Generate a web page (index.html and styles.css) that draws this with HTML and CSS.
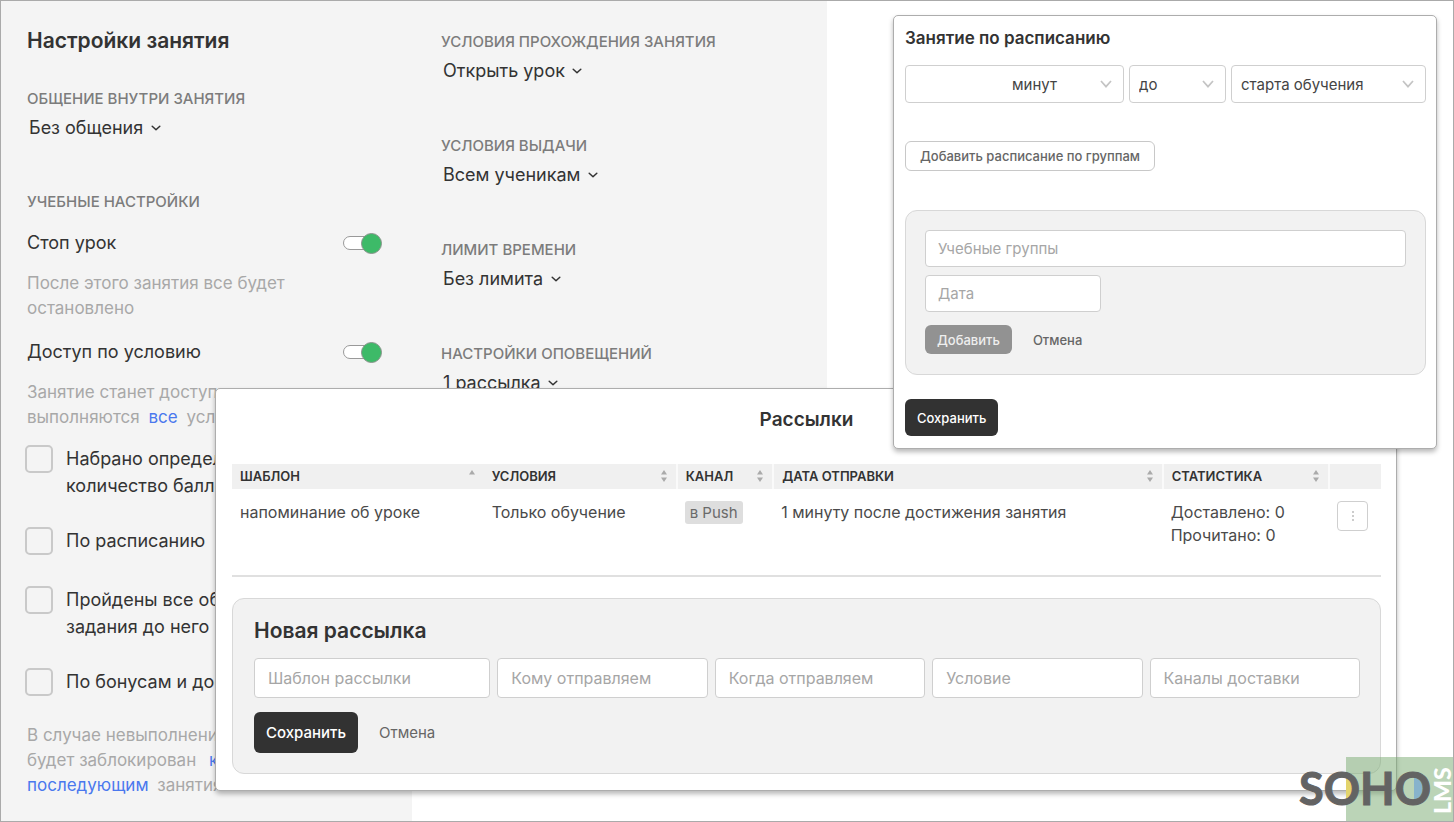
FILE: index.html
```html
<!DOCTYPE html>
<html lang="ru">
<head>
<meta charset="utf-8">
<title>Настройки занятия</title>
<link rel="stylesheet" href="styles.css">
</head>
<body>
<svg class="sprite" aria-hidden="true">
  <symbol id="chevron" viewBox="0 0 10 10"><path d="M1.2 3.2 5 6.8 8.8 3.2" fill="none" stroke="currentColor" stroke-width="1.5" stroke-linecap="round" stroke-linejoin="round"/></symbol>
  <symbol id="caret" viewBox="0 0 12 12"><path d="M1 3 6 8.6 11 3" fill="none" stroke="currentColor" stroke-width="1.7"/></symbol>
  <symbol id="sort" viewBox="0 0 8 14"><path d="M4 1 7 5.4H1ZM4 13 1 8.600h6Z" fill="currentColor"/></symbol>
  <symbol id="sort-up" viewBox="0 0 8 14"><path d="M4 1 7 5.4H1Z" fill="currentColor"/></symbol>
</svg>
<main class="page">
  <section class="column column-main">
    <h1 class="page-title">Настройки занятия</h1>
    <div class="setting">
      <label class="caption" for="talk">Общение внутри занятия</label>
      <span class="pick"><select id="talk"><option>Без общения</option></select><svg><use href="#chevron"/></svg></span>
    </div>
    <h2 class="caption">Учебные настройки</h2>
    <div class="toggle-row">
      <label for="stop">Стоп урок</label>
      <input class="toggle" type="checkbox" id="stop" checked>
    </div>
    <p class="hint">После этого занятия все будет<br>остановлено</p>
    <div class="toggle-row">
      <label for="access">Доступ по условию</label>
      <input class="toggle" type="checkbox" id="access" checked>
    </div>
    <p class="hint">Занятие станет доступно<br>выполняются <a class="first" href="#all">все</a> условия</p>
    <div class="checks">
      <label class="check"><input type="checkbox"><span>Набрано определенное<br>количество баллов</span></label>
      <label class="check"><input type="checkbox"><span>По расписанию</span></label>
      <label class="check"><input type="checkbox"><span>Пройдены все обязательные<br>задания до него</span></label>
      <label class="check"><input type="checkbox"><span>По бонусам и достижениям</span></label>
    </div>
    <p class="hint">В случае невыполнения<br>будет заблокирован <a href="#next">к<br>последующим</a> занятиям</p>
  </section>
  <section class="column column-side">
    <div class="setting">
      <label class="caption" for="pass">Условия прохождения занятия</label>
      <span class="pick"><select id="pass"><option>Открыть урок</option></select><svg><use href="#chevron"/></svg></span>
    </div>
    <div class="setting">
      <label class="caption" for="give">Условия выдачи</label>
      <span class="pick"><select id="give"><option>Всем ученикам</option></select><svg><use href="#chevron"/></svg></span>
    </div>
    <div class="setting">
      <label class="caption" for="limit">Лимит времени</label>
      <span class="pick"><select id="limit"><option>Без лимита</option></select><svg><use href="#chevron"/></svg></span>
    </div>
    <div class="setting">
      <label class="caption" for="notify">Настройки оповещений</label>
      <span class="pick"><select id="notify"><option>1 рассылка</option></select><svg><use href="#chevron"/></svg></span>
    </div>
  </section>

  <section class="window mailings">
    <h2 class="window-title">Рассылки</h2>
    <table class="grid">
      <colgroup><col class="c-template"><col class="c-cond"><col class="c-channel"><col class="c-date"><col class="c-stat"><col></colgroup>
      <thead>
        <tr>
          <th class="plain"><span class="th">Шаблон<svg><use href="#sort-up"/></svg></span></th>
          <th><span class="th">Условия<svg><use href="#sort"/></svg></span></th>
          <th><span class="th">Канал<svg><use href="#sort"/></svg></span></th>
          <th><span class="th">Дата отправки<svg><use href="#sort"/></svg></span></th>
          <th><span class="th">Статистика<svg><use href="#sort"/></svg></span></th>
          <th></th>
        </tr>
      </thead>
      <tbody>
        <tr>
          <td>напоминание об уроке</td>
          <td>Только обучение</td>
          <td><span class="tag">в Push</span></td>
          <td>1 минуту после достижения занятия</td>
          <td>Доставлено: 0<br>Прочитано: 0</td>
          <td><button class="more" type="button" aria-label="Меню"><svg viewBox="0 0 4 12"><circle cx="2" cy="2" r="1"/><circle cx="2" cy="6" r="1"/><circle cx="2" cy="10" r="1"/></svg></button></td>
        </tr>
      </tbody>
    </table>
    <form class="panel new-mailing">
      <h3>Новая рассылка</h3>
      <div class="fields">
        <input class="field" type="text" placeholder="Шаблон рассылки" aria-label="Шаблон рассылки">
        <input class="field" type="text" placeholder="Кому отправляем" aria-label="Кому отправляем">
        <input class="field" type="text" placeholder="Когда отправляем" aria-label="Когда отправляем">
        <input class="field" type="text" placeholder="Условие" aria-label="Условие">
        <input class="field" type="text" placeholder="Каналы доставки" aria-label="Каналы доставки">
      </div>
      <div class="actions">
        <button class="btn dark" type="button">Сохранить</button>
        <button class="btn text" type="button">Отмена</button>
      </div>
    </form>
  </section>

  <section class="window schedule">
    <h2>Занятие по расписанию</h2>
    <div class="selects">
      <span class="box unit"><select aria-label="Единица времени"><option>минут</option></select><svg><use href="#caret"/></svg></span>
      <span class="box"><select aria-label="До или после"><option>до</option></select><svg><use href="#caret"/></svg></span>
      <span class="box"><select aria-label="Событие"><option>старта обучения</option></select><svg><use href="#caret"/></svg></span>
    </div>
    <button class="btn outline" type="button">Добавить расписание по группам</button>
    <div class="panel groups">
      <input class="field" type="text" placeholder="Учебные группы" aria-label="Учебные группы">
      <input class="field date" type="text" placeholder="Дата" aria-label="Дата">
      <div class="actions">
        <button class="btn muted" type="button">Добавить</button>
        <button class="btn text" type="button">Отмена</button>
      </div>
    </div>
    <button class="btn dark" type="button">Сохранить</button>
  </section>

  <svg class="logo" viewBox="0 0 156 64" role="img" aria-label="SOHO LMS">
    <rect x="49" width="107" height="64" fill="#78aa70" fill-opacity=".5"/>
    <path d="M49 20a11 12 0 0 1 0 24z" fill="#e3d46c"/>
    <path d="M117 20a11 12 0 0 1 0 24z" fill="#87b3cc"/>
    <text class="logo-name" x="2" y="48">SOHO</text>
    <text class="logo-sub" transform="translate(154 57) rotate(-90)">LMS</text>
  </svg>
</main>
</body>
</html>
```
FILE: styles.css
```css
* { box-sizing: border-box; }

body {
  margin: 0;
  font-family: Inter, "Noto Sans", sans-serif;
  font-size: 18px;
  color: #333;
  background: #fff;
}

h1, h2, h3, p { margin: 0; }

button, input, select { font: inherit; color: inherit; }

.sprite { display: none; }

.page {
  position: relative;
  display: flex;
  align-items: flex-start;
  min-height: 100vh;
  border: 1px solid #aaa;
  overflow: hidden;
}

/* lesson settings */
.column { background: #f4f4f4; }

.column-main {
  flex: 0 0 411px;
  align-self: stretch;
  padding: 24px 30px 0 26px;
}

.column-side {
  flex: 0 0 415px;
  padding: 31px 30px 0 29px;
}

.page-title {
  margin-bottom: 32px;
  font-size: 21px;
  line-height: 32px;
  font-weight: 600;
}

.caption {
  display: block;
  font-size: 15px;
  line-height: 20px;
  font-weight: 500;
  color: #7c7c7c;
  text-transform: uppercase;
}

.setting { margin-bottom: 51px; }

.column-side .setting { margin-bottom: 52px; }

.pick {
  display: flex;
  align-items: center;
  gap: 7px;
  margin-top: 6px;
  padding-left: 2px;
  line-height: 26px;
}

.pick select, .box select {
  height: 26px;
  margin: 0;
  padding: 0;
  border: 0;
  background: none;
  appearance: none;
}

.pick svg { width: 10px; height: 10px; }

.toggle-row {
  display: flex;
  align-items: center;
  justify-content: space-between;
  margin-top: 18px;
  line-height: 26px;
}

.toggle {
  position: relative;
  width: 39px;
  height: 20px;
  margin: 0;
  appearance: none;
}

.toggle::before {
  content: "";
  position: absolute;
  inset: 3px 6px 3px 0;
  border: 1px solid #999;
  border-radius: 7px;
  background: #fff;
}

.toggle::after {
  content: "";
  position: absolute;
  top: 0;
  right: 0;
  width: 19px;
  height: 19px;
  border: 1px solid #8a938c;
  border-radius: 50%;
  background: #3dba68;
}

.hint {
  margin-top: 15px;
  font-size: 17px;
  line-height: 25px;
  color: #a8a8a8;
  white-space: nowrap;
}

.hint a {
  margin: 0 4px 0 8px;
  color: #4a78ee;
  text-decoration: none;
}

.hint a.first { margin-left: 4px; }

.checks {
  display: grid;
  gap: 28px;
  margin: 15px 0 24px -2px;
}

.check {
  display: flex;
  gap: 13px;
  min-height: 31px;
  line-height: 27px;
  white-space: nowrap;
}

.check input {
  flex: none;
  width: 28px;
  height: 28px;
  margin: 0;
  appearance: none;
  border: 2px solid #c9c9c9;
  border-radius: 5px;
}

/* floating windows */
.window {
  position: absolute;
  border: 1px solid #adadad;
  border-radius: 5px;
  background: #fff;
  box-shadow: 0 3px 5px rgba(0, 0, 0, .28);
}

.panel {
  border: 1px solid #d8d8d8;
  border-radius: 12px;
  background: #f2f2f2;
}

.field, .box {
  min-width: 0;
  border: 1px solid #cfcfcf;
  border-radius: 4px;
  background: #fff;
}

.field { padding: 0 13px; }

.field::placeholder { color: #a6a6a6; opacity: 1; }

.btn {
  border: 1px solid transparent;
  border-radius: 6px;
  background: none;
  white-space: nowrap;
}

.btn.dark { background: #323232; color: #fff; font-weight: 500; }
.btn.muted { background: #929292; color: #eee; }
.btn.text { padding: 0; color: #666; }
.btn.outline { border-color: #c8c8c8; color: #666; background: #fff; }

.actions { display: flex; align-items: center; }

.mailings {
  top: 387px;
  left: 214px;
  right: 56px;
  padding: 17px 15px 16px 16px;
  font-size: 16px;
}

.window-title {
  font-size: 19px;
  line-height: 28px;
  font-weight: 600;
  text-align: center;
}

.grid {
  width: 100%;
  margin-top: 30px;
  border-collapse: collapse;
  table-layout: fixed;
  border-bottom: 2px solid #e0e0e0;
}

.c-template { width: 21.9%; }
.c-cond { width: 16.8%; }
.c-channel { width: 8.4%; }
.c-date { width: 33.9%; }
.c-stat { width: 14.5%; }

.grid th {
  height: 25px;
  padding: 0 8px 2px;
  border-right: 2px solid #fafafa;
  background: #f0f0f0;
  font-size: 13px;
  line-height: 16px;
  font-weight: 600;
  text-align: left;
  text-transform: uppercase;
}

.grid th.plain, .grid th:last-child { border-right: 0; }

.th {
  display: flex;
  align-items: center;
  justify-content: space-between;
}

.th svg { width: 8px; height: 14px; color: #aaa; }

.grid td {
  height: 87px;
  padding: 12px 8px 0;
  line-height: 23px;
  vertical-align: top;
  color: #4a4a4a;
  white-space: nowrap;
}

.tag {
  display: inline-block;
  padding: 0 5px;
  border-radius: 3px;
  background: #dedede;
  color: #6a6a6a;
  font-size: 15px;
}

.more {
  display: grid;
  place-items: center;
  width: 31px;
  height: 30px;
  padding: 0;
  border: 1px solid #cfcfcf;
  border-radius: 4px;
  background: #fff;
}

.more svg { width: 4px; height: 12px; fill: #bbb; }

.new-mailing {
  margin-top: 21px;
  padding: 18px 20px 20px 21px;
}

.new-mailing h3 {
  font-size: 21px;
  line-height: 28px;
  font-weight: 600;
}

.fields {
  display: grid;
  grid-template-columns: 237fr repeat(4, 211fr);
  gap: 7px;
  margin: 13px 0 14px;
}

.fields .field { height: 40px; }

.new-mailing .actions { gap: 20px; }
.new-mailing .btn { height: 41px; font-size: 15px; }
.new-mailing .btn.dark { padding: 0 11px; }

.schedule {
  top: 14px;
  left: 892px;
  right: 16px;
  padding: 10px 10px 12px 11px;
  font-size: 15px;
}

.schedule h2 {
  font-size: 17px;
  line-height: 24px;
  font-weight: 600;
}

.selects {
  display: grid;
  grid-template-columns: 219fr 97fr 195fr;
  gap: 5px;
  margin: 15px 0 38px;
}

.box {
  display: flex;
  align-items: center;
  height: 38px;
  padding: 0 11px 0 9px;
}

.box select { flex: 1; min-width: 0; color: #444; }
.box svg { flex: none; width: 12px; height: 12px; color: #c4c4c4; }
.box.unit { padding-left: 106px; }

.schedule .btn { font-size: 13px; font-weight: 500; }

.btn.outline {
  height: 30px;
  padding: 0 14px;
}

.groups {
  display: flex;
  flex-direction: column;
  gap: 8px;
  margin: 39px 0 24px;
  padding: 19px 19px 20px;
}

.groups .field { width: 100%; height: 37px; padding: 0 12px; }
.groups .date { width: 176px; }
.groups .actions { gap: 20px; margin-top: 5px; }
.groups .btn { height: 29px; }
.groups .btn.muted { padding: 0 11px; }
.schedule > .btn.dark { height: 37px; padding: 0 11px; }

.logo {
  position: absolute;
  right: 0;
  bottom: 0;
  width: 156px;
  height: 64px;
}

.logo-name {
  font: 700 45px Lato, sans-serif;
  fill: #636363;
  stroke: #636363;
  stroke-width: 1px;
}

.logo-sub { font: 900 23px Lato, sans-serif; fill: #fff; }
```
